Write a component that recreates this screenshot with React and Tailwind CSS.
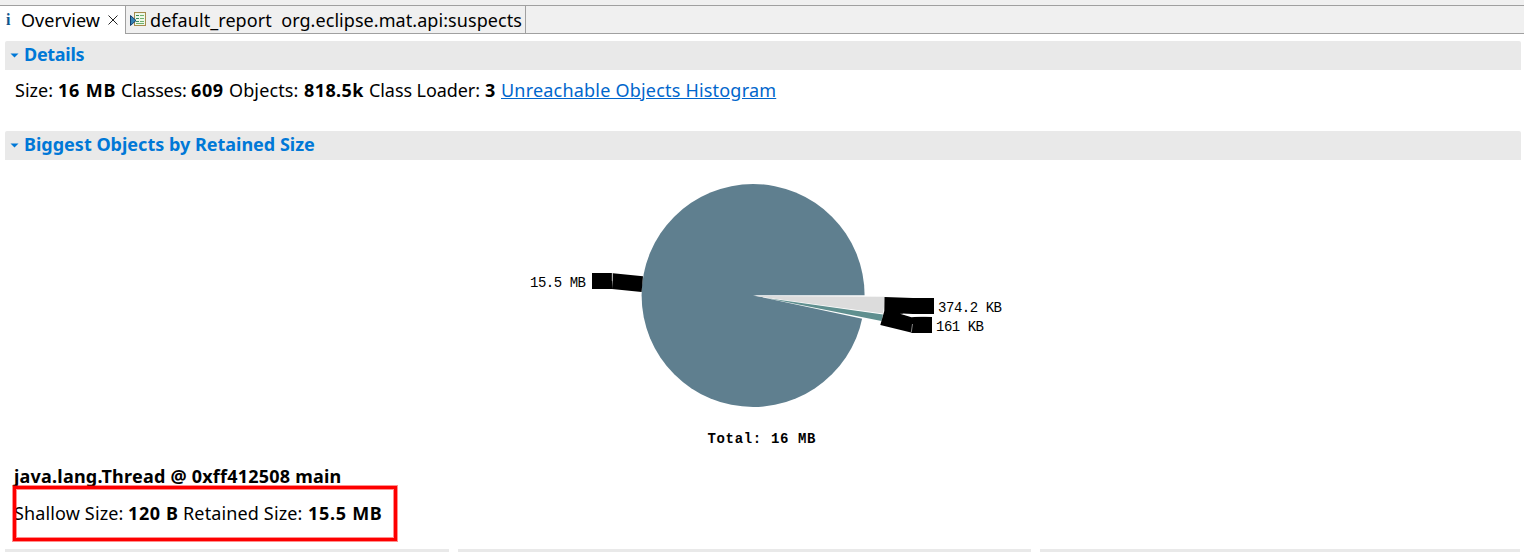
import React from 'react';

function Header({ className = '', children }) {
  return (
    <div className="ml-[5px] mr-[3px] flex h-[29px] items-center rounded-t-[2px] bg-[#e9e9e9] pl-[5px]">
      <svg width="9" height="5" viewBox="0 0 9 5" className="mr-[5px]">
        <path d="M0.5 0.5h8L4.5 4.5z" fill="#0078d7" />
      </svg>
      <h2 className={`pb-[2px] text-[18px] leading-[27px] font-bold whitespace-pre text-[#0078d7] ${className}`}>{children}</h2>
    </div>
  );
}

function Run({ className = '', children }) {
  return <span className={`inline-block whitespace-pre ${className}`}>{children}</span>;
}

function ReportIcon() {
  return (
    <svg width="17" height="16" viewBox="0 0 17 16" shapeRendering="crispEdges">
      <rect x="4.5" y="0.5" width="11" height="13" fill="#eef8e8" stroke="#a58a4c" />
      <path d="M6 3.5h3M6 6.5h3M6 9.5h3" stroke="#3d8a5a" />
      <path d="M10 3.5h4M10 6.5h4M10 9.5h4M6 11.5h8" stroke="#6fb06f" />
      <path d="M0.5 3.5v10L6 8.5z" fill="#3482b4" stroke="#123f6e" shapeRendering="auto" />
    </svg>
  );
}

function Pie() {
  return (
    <svg width="520" height="290" viewBox="510 170 520 290" className="block">
      <circle cx="753.1" cy="295.5" r="111.5" fill="#5f7f8f" />
      <path d="M753 295.2H867V319.4L862.3 318.7Z" fill="#fff" />
      <path d="M755 296L884.5 296.8Q884.5 306 883 313.6Z" fill="#dcdcdc" />
      <path d="M766 298L883 314.4L881.5 321Z" fill="#5f8f8f" />
      <g fill="#000">
        <path d="M592 273h20v16h-20zM613 273.2L643 276.3L641.6 292L612 289z" />
        <path d="M884.5 297L913 298h21v16h-21L902 313.6L911 316.5L932 317v16h-20L911 332.5L880.3 325L884.3 311z" />
      </g>
      <path d="M612.3 273v8" stroke="#aaa" />
      <path d="M911.3 332l1.2-8" stroke="#bbb" strokeWidth=".7" />
      <path d="M900 313.8L911.5 317.3L932 315.5V314.2H912Z" fill="#fff" />
      <g fontFamily="'Liberation Mono', monospace" fontSize="14" fill="#000">
        <text x="530" y="286.5" textLength="56">15.5 MB</text>
        <text x="938" y="311.5" textLength="64">374.2 KB</text>
        <text x="936" y="330.5" textLength="48">161 KB</text>
        <text x="707.5" y="442.5" textLength="108" fontWeight="bold">Total: 16 MB</text>
      </g>
    </svg>
  );
}

export default function App() {
  return (
    <div className="relative flex h-[552px] w-[1524px] flex-col overflow-hidden bg-white font-['Noto_Sans','Open_Sans',sans-serif] text-[18px] text-black">
      <div className="h-[6px] shrink-0 border-b border-[#a0a0a0] bg-[#f0f0f0]" />
      <div className="flex h-7 shrink-0 leading-[28px]">
        <div className="flex w-[126px] items-center border-r border-[#a0a0a0] bg-white pl-[6px]">
          <span className="w-[15px] font-['Liberation_Serif',serif] text-[16px] font-bold text-[#10568c]">i</span>
          <Run className="w-[80px] tracking-[0.05px]">Overview</Run>
          <svg width="10" height="10" viewBox="0 0 10 10" className="ml-[7px]">
            <path d="M.5 .5l9 9M9.5 .5l-9 9" stroke="#222" />
          </svg>
        </div>
        <div className="flex w-[400px] items-center border-r border-b border-[#a0a0a0] bg-[#f0f0f0] pl-[4px]">
          <ReportIcon />
          <Run className="ml-[3px] tracking-[0.06px]">default_report  org.eclipse.mat.api:suspects</Run>
        </div>
        <div className="flex-1 border-b border-[#a0a0a0] bg-[#f0f0f0]" />
      </div>
      <div className="h-[7px] shrink-0" />
      <Header className="tracking-[-0.3px]">Details</Header>
      <p className="flex h-[61px] shrink-0 pt-[6px] pl-[15px] leading-[28px]">
        <Run className="w-[43px]">Size:</Run>
        <Run className="w-[63px] font-bold tracking-[0.8px]">16 MB</Run>
        <Run className="w-[70px] tracking-[-0.15px]">Classes:</Run>
        <Run className="w-[38px] font-bold tracking-[0.6px]">609</Run>
        <Run className="w-[75px] tracking-[0.12px]">Objects:</Run>
        <Run className="w-[65px] font-bold tracking-[0.4px]">818.5k</Run>
        <Run className="w-[116px] tracking-[-0.08px]">Class Loader:</Run>
        <Run className="w-[16px] font-bold">3</Run>
        <Run className="tracking-[0.2px] text-[#0066cc] underline">Unreachable Objects Histogram</Run>
      </p>
      <Header>Biggest Objects by Retained Size</Header>
      <div className="mt-[10px] ml-[510px] h-[290px] shrink-0">
        <Pie />
      </div>
      <p className="h-[26px] shrink-0 pt-[2px] pl-[14px] leading-[28px] font-bold">
        <Run className="tracking-[0.22px]">java.lang.Thread @ 0xff412508 main</Run>
      </p>
      <p className="flex h-[63px] shrink-0 pt-[13px] pl-[14px] leading-[28px]">
        <Run className="w-[114px] tracking-[0.14px]">Shallow Size:</Run>
        <Run className="w-[55px] font-bold tracking-[0.6px]">120 B</Run>
        <Run className="w-[125px] tracking-[0.14px]">Retained Size:</Run>
        <Run className="font-bold tracking-[0.7px]">15.5 MB</Run>
      </p>
      <div className="flex h-[3px] shrink-0 gap-[9px] pr-[4px] pl-[5px]">
        <div className="w-[444px] bg-[#e9e9e9]" />
        <div className="w-[573px] bg-[#e9e9e9]" />
        <div className="flex-1 bg-[#e9e9e9]" />
      </div>
      <div className="absolute top-[486px] left-[13px] h-[55px] w-[384px] border-[3px] border-[#fe0000] shadow-[0_0_0_1px_#ff000070,inset_0_0_0_1px_#ff000070]" />
    </div>
  );
}
